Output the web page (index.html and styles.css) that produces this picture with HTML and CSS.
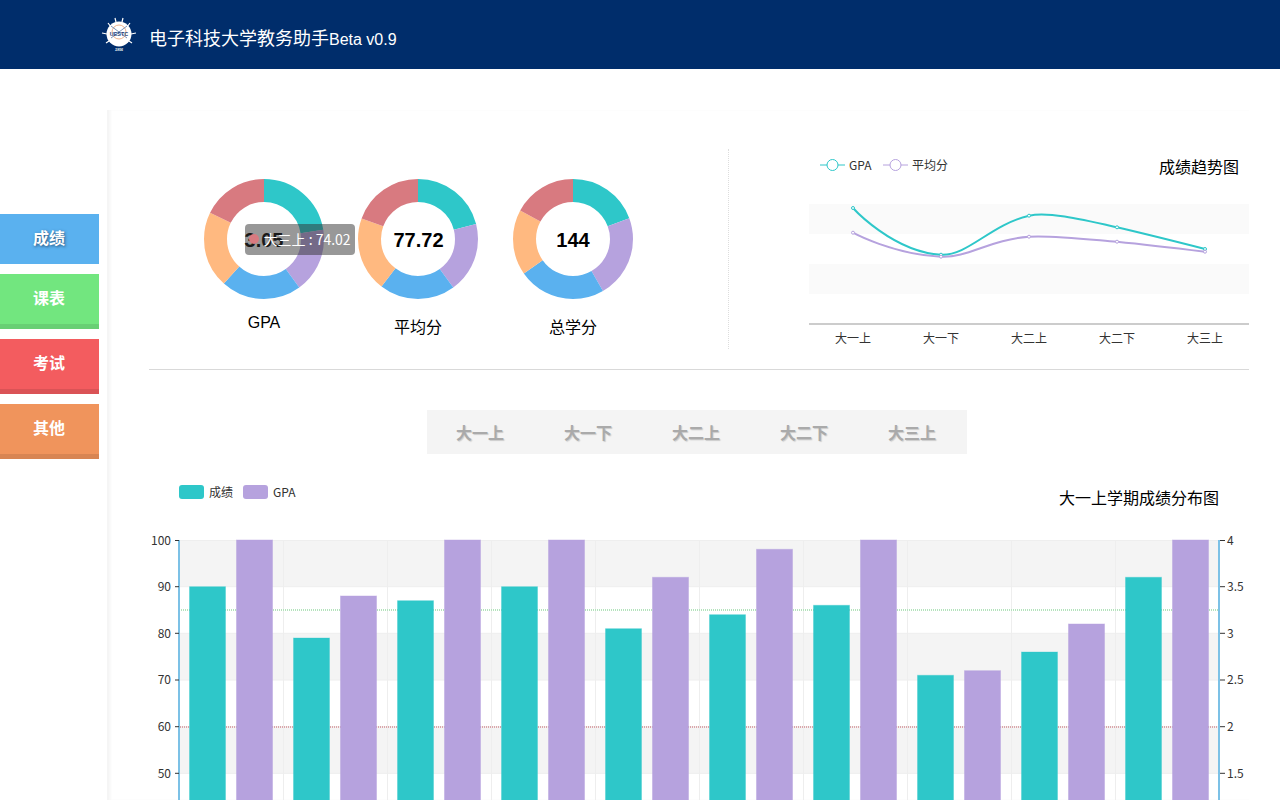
FILE: index.html
```html
<!DOCTYPE html>
<html lang="zh">
<head>
<meta charset="utf-8">
<title>电子科技大学教务助手</title>
<link rel="stylesheet" href="styles.css">
</head>
<body>
<header class="topbar">
  <svg class="logo" viewBox="0 0 36 36" width="36" height="36">
    <circle cx="18" cy="17" r="12.5" fill="#fff"/>
    <g stroke="#fff" stroke-width="1.2" fill="none">
      <path d="M1 16l5 1M35 16l-5 1M7 6l3 4M29 6l-3 4M14 1l1 4M22 1l-1 4M5 26l3-2M31 26l-3-2"/>
    </g>
    <circle cx="18" cy="15" r="7" fill="none" stroke="#e8a070" stroke-width="0.8"/>
    <path d="M10 9l16 12M26 9l-16 12" stroke="#5a78a8" stroke-width="0.8"/>
    <text class="logo-name" x="18" y="19" text-anchor="middle">UESTC</text>
    <text class="logo-sub" x="18" y="34" text-anchor="middle">1956</text>
  </svg>
  <h1 class="brand">电子科技大学教务助手<span class="brand-ver">Beta v0.9</span></h1>
</header>

<div class="app">
  <nav class="side">
    <a class="nav nav-blue">成绩</a>
    <a class="nav nav-green">课表</a>
    <a class="nav nav-red">考试</a>
    <a class="nav nav-orange">其他</a>
  </nav>

  <main class="main">
    <section class="summary">
      <div class="donuts">
        <figure class="donut">
          <svg viewBox="0 0 120 120" width="120" height="120">
            <g class="ring">
              <circle class="s1" pathLength="360" stroke-dasharray="81 279" stroke-dashoffset="0"/>
              <circle class="s2" pathLength="360" stroke-dasharray="63 297" stroke-dashoffset="-81"/>
              <circle class="s3" pathLength="360" stroke-dasharray="78 282" stroke-dashoffset="-144"/>
              <circle class="s4" pathLength="360" stroke-dasharray="74 286" stroke-dashoffset="-222"/>
              <circle class="s5" pathLength="360" stroke-dasharray="64 296" stroke-dashoffset="-296"/>
            </g>
            <text class="donut-num" x="60" y="68" text-anchor="middle">3.05</text>
          </svg>
          <figcaption class="cap cap-latin">GPA</figcaption>
          <div class="tip"><i class="tip-dot"></i>大三上 : 74.02</div>
        </figure>
        <figure class="donut">
          <svg viewBox="0 0 120 120" width="120" height="120">
            <g class="ring">
              <circle class="s1" pathLength="360" stroke-dasharray="75.5 284.5" stroke-dashoffset="0"/>
              <circle class="s2" pathLength="360" stroke-dasharray="68.5 291.5" stroke-dashoffset="-75.5"/>
              <circle class="s3" pathLength="360" stroke-dasharray="73.5 286.5" stroke-dashoffset="-144"/>
              <circle class="s4" pathLength="360" stroke-dasharray="72.5 287.5" stroke-dashoffset="-217.5"/>
              <circle class="s5" pathLength="360" stroke-dasharray="70 290" stroke-dashoffset="-290"/>
            </g>
            <text class="donut-num" x="60.5" y="68" text-anchor="middle">77.72</text>
          </svg>
          <figcaption class="cap">平均分</figcaption>
        </figure>
        <figure class="donut donut-last">
          <svg viewBox="0 0 120 120" width="120" height="120">
            <g class="ring">
              <circle class="s1" pathLength="360" stroke-dasharray="69.7 290.3" stroke-dashoffset="0"/>
              <circle class="s2" pathLength="360" stroke-dasharray="80.3 279.7" stroke-dashoffset="-69.7"/>
              <circle class="s3" pathLength="360" stroke-dasharray="85 275" stroke-dashoffset="-150"/>
              <circle class="s4" pathLength="360" stroke-dasharray="63.4 296.6" stroke-dashoffset="-235"/>
              <circle class="s5" pathLength="360" stroke-dasharray="61.6 298.4" stroke-dashoffset="-298.4"/>
            </g>
            <text class="donut-num" x="60" y="68" text-anchor="middle">144</text>
          </svg>
          <figcaption class="cap">总学分</figcaption>
        </figure>
      </div>
      <div class="trend">
        <svg viewBox="809 149 440 200" width="440" height="200">
          <rect class="band-soft" x="809" y="204" width="440" height="30"/>
          <rect class="band-soft" x="809" y="264" width="440" height="30"/>
          <rect class="axis-base" x="809" y="323" width="440" height="2"/>
          <g class="legend-line">
            <path class="c-teal" d="M820 165h25"/><circle class="c-teal" cx="832.5" cy="165" r="5.5"/>
            <path class="c-purple" d="M883 165h25"/><circle class="c-purple" cx="895.5" cy="165" r="5.5"/>
          </g>
          <text class="t12" x="849" y="170">GPA</text>
          <text class="t12" x="912" y="170">平均分</text>
          <text class="t16" x="1159" y="173">成绩趋势图</text>
          <path class="line c-purple" d="M853 232.7C853 232.7 893 254.5 941 256.7C968 258 990 239.5 1029 236.7C1048 235 1080 238.5 1117 241.7C1150 245 1205 251.7 1205 251.7"/>
          <path class="line c-teal" d="M853 208C853 208 893 252 941 254.7C968 256 990 225 1029 215.7C1048 211.5 1080 219 1117 227.3C1150 235 1205 249 1205 249"/>
          <g class="pt c-teal">
            <circle cx="853" cy="208" r="1.5"/><circle cx="941" cy="254.7" r="1.5"/><circle cx="1029" cy="215.7" r="1.5"/><circle cx="1117" cy="227.3" r="1.5"/><circle cx="1205" cy="249" r="1.5"/>
          </g>
          <g class="pt c-purple">
            <circle cx="853" cy="232.7" r="1.5"/><circle cx="941" cy="256.7" r="1.5"/><circle cx="1029" cy="236.7" r="1.5"/><circle cx="1117" cy="241.7" r="1.5"/><circle cx="1205" cy="251.7" r="1.5"/>
          </g>
          <g class="t12" text-anchor="middle">
            <text x="853" y="343">大一上</text><text x="941" y="343">大一下</text><text x="1029" y="343">大二上</text><text x="1117" y="343">大二下</text><text x="1205" y="343">大三上</text>
          </g>
        </svg>
      </div>
    </section>

    <div class="tabs">
      <button class="tab">大一上</button>
      <button class="tab">大一下</button>
      <button class="tab">大二上</button>
      <button class="tab">大二下</button>
      <button class="tab">大三上</button>
    </div>

    <svg class="bars" viewBox="149 470 1100 330" width="1100" height="330">
      <rect class="leg-teal" x="179" y="485" width="25" height="14" rx="3"/>
      <text class="t12" x="209" y="497">成绩</text>
      <rect class="leg-purple" x="243" y="485" width="25" height="14" rx="3"/>
      <text class="t12" x="273" y="497">GPA</text>
      <text class="t16" x="1059" y="504">大一上学期成绩分布图</text>

      <rect class="band" x="180" y="540" width="1039" height="46.7"/>
      <rect class="band" x="180" y="633.3" width="1039" height="46.7"/>
      <rect class="band" x="180" y="726.7" width="1039" height="46.7"/>
      <path class="grid" d="M180 540.5H1219M180 586.7H1219M180 633.3H1219M180 680H1219M180 726.7H1219M180 773.3H1219M283.5 540V800M387.5 540V800M491.5 540V800M595.5 540V800M699.5 540V800M803.5 540V800M907.5 540V800M1011.5 540V800M1115.5 540V800"/>

      <path class="mark-green" d="M181 610H1219"/>
      <path class="mark-red" d="M180 727H1219"/>

      <g class="bar-teal">
        <rect x="189.5" y="586.7" width="36" height="220"/>
        <rect x="293.5" y="638" width="36" height="170"/>
        <rect x="397.5" y="600.7" width="36" height="205"/>
        <rect x="501.5" y="586.7" width="36" height="220"/>
        <rect x="605.5" y="628.7" width="36" height="180"/>
        <rect x="709.5" y="614.7" width="36" height="190"/>
        <rect x="813.5" y="605.3" width="36" height="200"/>
        <rect x="917.5" y="675.3" width="36" height="130"/>
        <rect x="1021.5" y="652" width="36" height="155"/>
        <rect x="1125.5" y="577.3" width="36" height="230"/>
      </g>
      <g class="bar-purple">
        <rect x="236.5" y="540" width="36" height="270"/>
        <rect x="340.5" y="596" width="36" height="210"/>
        <rect x="444.5" y="540" width="36" height="270"/>
        <rect x="548.5" y="540" width="36" height="270"/>
        <rect x="652.5" y="577.3" width="36" height="230"/>
        <rect x="756.5" y="549.3" width="36" height="260"/>
        <rect x="860.5" y="540" width="36" height="270"/>
        <rect x="964.5" y="670.7" width="36" height="140"/>
        <rect x="1068.5" y="624" width="36" height="180"/>
        <rect x="1172.5" y="540" width="36" height="270"/>
      </g>

      <path class="axis" d="M179 540V800M1219 540V800"/>
      <path class="tick" d="M175 540.5H179M175 586.7H179M175 633.3H179M175 680H179M175 726.7H179M175 773.3H179M1220 540.5H1225M1220 586.7H1225M1220 633.3H1225M1220 680H1225M1220 726.7H1225M1220 773.3H1225"/>
      <g class="t12" text-anchor="end">
        <text x="171" y="545">100</text><text x="171" y="591">90</text><text x="171" y="638">80</text><text x="171" y="684">70</text><text x="171" y="731">60</text><text x="171" y="778">50</text>
      </g>
      <g class="t12">
        <text x="1227" y="545">4</text><text x="1227" y="591">3.5</text><text x="1227" y="638">3</text><text x="1227" y="684">2.5</text><text x="1227" y="731">2</text><text x="1227" y="778">1.5</text>
      </g>
    </svg>
  </main>
</div>
</body>
</html>
```
FILE: styles.css
```css
* { box-sizing: border-box; }
html, body { margin: 0; height: 800px; overflow: hidden; background: #fff; }
body { font-family: "Liberation Sans", "Noto Sans CJK SC", sans-serif; color: #000; }

.topbar { height: 69px; background: #002d6b; display: flex; align-items: center; padding: 0 0 0 101px; }
.brand { margin: 0 0 0 12px; padding-top: 4px; font-size: 18px; font-weight: 400; color: #fff; }
.brand-ver { font-size: 16px; }
.logo-name { font: 700 5.5px "Liberation Sans", sans-serif; fill: #1c3f7c; }
.logo-sub { font: italic 700 3.5px "Liberation Sans", sans-serif; fill: #fff; }

.app { display: flex; height: 731px; overflow: hidden; }
.side { width: 99px; flex: none; padding-top: 145px; display: flex; flex-direction: column; gap: 10px; }
.nav { display: flex; align-items: center; justify-content: center; height: 55px; padding: 0 1px 4px 0; border-bottom: 5px solid; color: #fff; font-size: 16px; font-weight: 700; }
.nav-blue { height: 50px; border-bottom: 0; background: #5ab1ef; text-shadow: 1px 1px 3px #27527a; }
.nav-green { background: #72e67f; border-color: #68cf74; }
.nav-red { background: #f35c5f; border-color: #da5356; }
.nav-orange { background: #f0945c; border-color: #d88553; }

.main { width: 1142px; margin: 41px 0 0 8px; padding: 39px 0 0 40px; border-left: 2px solid #f5f5f5; box-shadow: inset 2px 0 2px #f8f8f8; flex: none; }
.summary { display: flex; height: 221px; padding-bottom: 20px; border-bottom: 1px solid #d9d9d9; }
.donuts { width: 580px; flex: none; display: flex; padding: 30px 0 0 38px; border-right: 1px dotted #ddd; }
.donut { position: relative; width: 154px; height: 170px; margin: 0; flex: none; }
.donut-last { margin-left: 1px; }
.donut svg { display: block; margin-left: 17px; }
.ring circle { cx: 60px; cy: 60px; r: 48.5px; fill: none; stroke-width: 23px; transform: rotate(-90deg); transform-origin: 60px 60px; }
.s1 { stroke: #2ec7c9; }
.s2 { stroke: #b6a2de; }
.s3 { stroke: #5ab1ef; }
.s4 { stroke: #ffb980; }
.s5 { stroke: #d87a80; }
.donut-num { font: 700 20px "Liberation Sans", sans-serif; fill: #000; }
.cap { margin: 0 0 0 17px; width: 120px; text-align: center; font-size: 16px; line-height: 20px; padding-top: 19px; }
.cap-latin { padding-top: 14px; }

.tip { position: absolute; left: 58px; top: 45px; width: 110px; height: 31px; padding-left: 18.5px; background: rgba(50, 50, 50, .5); border-radius: 4px; color: #fff; font: 14px/31px "Noto Sans CJK SC", sans-serif; white-space: nowrap; }
.tip-dot { position: absolute; left: 4px; top: 10px; width: 10px; height: 10px; border-radius: 50%; background: #d87a80; }

.trend { margin-left: 80px; }
.trend svg, .bars { display: block; }
.t12 { font: 12px "Noto Sans CJK SC", sans-serif; fill: #333; }
.t16 { font: 16px "Liberation Sans", "Noto Sans CJK SC", sans-serif; fill: #000; }
.band-soft { fill: #fafafa; }
.axis-base { fill: #ccc; }
.legend-line path, .legend-line circle { fill: #fff; stroke-width: 1; }
.c-teal { stroke: #2ec7c9; }
.c-purple { stroke: #b6a2de; }
.line { fill: none; stroke-width: 2; }
.pt { fill: #fff; stroke-width: 1; }

.tabs { display: flex; width: 540px; margin: 40px 0 0 278px; background: #f4f4f4; }
.tab { width: 108px; height: 44px; padding: 0 2px 0 0; border: 0; background: #f4f4f4; color: #aaa; font: 700 16px "Liberation Sans", "Noto Sans CJK SC", sans-serif; text-shadow: 1px 1px 1px #ccc; }

.bars { margin-top: 16px; }
.leg-teal { fill: #2ec7c9; }
.leg-purple { fill: #b6a2de; }
.band { fill: #f4f4f4; }
.grid { fill: none; stroke: #eee; stroke-width: 1; }
.bar-teal rect { fill: #2ec7c9; stroke: rgba(46, 199, 201, .35); stroke-width: 1; }
.bar-purple rect { fill: #b6a2de; stroke: rgba(182, 162, 222, .45); stroke-width: 1; }
.mark-green { fill: none; stroke: #b5e3bd; stroke-width: 2; stroke-dasharray: 1 1; }
.mark-red { fill: none; stroke: #dca6aa; stroke-width: 2; stroke-dasharray: 1 1; }
.axis { fill: none; stroke: #7cc1e6; stroke-width: 2; }
.tick { fill: none; stroke: #333; stroke-width: 1; }
```
